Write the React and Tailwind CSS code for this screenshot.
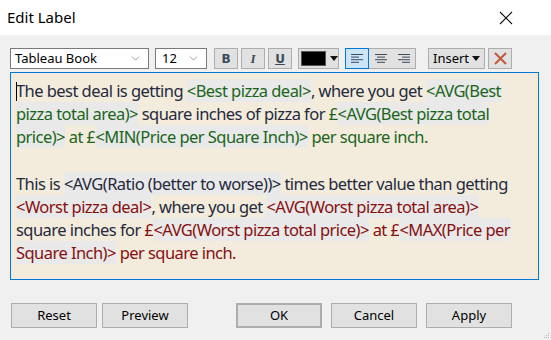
import { ChevronDown } from 'lucide-react';

const G = 'text-[#1b651b]';
const R = 'text-[#861010]';
const D = 'text-[#242a3c]';
const HL = 'bg-[#e9e9e9]';

function Seg({ c = D, hl, children }) {
  return <span className={`${c} ${hl ? HL : ''}`}>{children}</span>;
}

function AlignIcon({ kind }) {
  const lines =
    kind === 'left'
      ? [[0, 12], [0, 8], [0, 12], [0, 8]]
      : kind === 'center'
      ? [[0, 12], [2, 10], [0, 12], [2, 10]]
      : [[0, 12], [4, 12], [0, 12], [4, 12]];
  return (
    <svg width="12" height="10" viewBox="0 0 12 10">
      {lines.map(([a, b], i) => (
        <rect key={i} x={a} y={i * 2.6} width={b - a} height="1" fill="#3c4a5c" />
      ))}
    </svg>
  );
}

function Btn({ children, className = '' }) {
  return (
    <div className={`h-[25px] w-[86px] flex items-center justify-center bg-[#e1e1e1] border border-[#adadad] text-[13px] text-black ${className}`}>
      {children}
    </div>
  );
}

export default function App() {
  return (
    <div className="w-[551px] h-[340px] bg-[#f0f0f0] flex flex-col font-['Noto_Sans',sans-serif] overflow-hidden relative">
      <div className="h-[35px] bg-white flex items-center justify-between pl-[7px] pr-[38px] shrink-0">
        <span className="text-[15px] text-black">Edit Label</span>
        <svg width="14" height="14" viewBox="0 0 14 14">
          <path d="M1 1L13 13M13 1L1 13" stroke="#111" strokeWidth="1.1" />
        </svg>
      </div>

      <div className="flex items-center mt-[13px] pl-[10px] h-[21px]">
        <div className="w-[139px] h-[21px] bg-white border border-[#7a7a7a] flex items-center justify-between pl-[4px] pr-[6px] text-[13px] text-black">
          Tableau Book
          <ChevronDown size={13} strokeWidth={1.2} color="#666" />
        </div>
        <div className="ml-[6px] w-[52px] h-[21px] bg-white border border-[#7a7a7a] flex items-center justify-between pl-[6px] pr-[6px] text-[13px] text-black">
          12
          <ChevronDown size={13} strokeWidth={1.2} color="#666" />
        </div>
        <div className="ml-[7px] w-[24px] h-[21px] bg-[#e1e1e1] border border-[#adadad] flex items-center justify-center text-[12px] font-bold text-[#3c4a5c] font-['DejaVu_Sans',sans-serif]">B</div>
        <div className="ml-[3px] w-[24px] h-[21px] bg-[#e1e1e1] border border-[#adadad] flex items-center justify-center text-[13px] font-bold italic text-[#3c4a5c] font-['Liberation_Serif',serif]">I</div>
        <div className="ml-[3px] w-[24px] h-[21px] bg-[#e1e1e1] border border-[#adadad] flex items-center justify-center text-[12px] font-bold underline text-[#3c4a5c] font-['DejaVu_Sans',sans-serif]">U</div>
        <div className="ml-[6px] w-[41px] h-[21px] bg-[#e1e1e1] border border-[#adadad] flex items-center pl-[2px] gap-[2px]">
          <div className="w-[25px] h-[15px] bg-black border border-[#555]" />
          <svg width="8" height="5" viewBox="0 0 8 5" className="ml-[2px]">
            <path d="M0 0H8L4 5Z" fill="#111" />
          </svg>
        </div>
        <div className="ml-[6px] flex h-[21px] border border-[#adadad] bg-[#e1e1e1]">
          <div className="w-[24px] -m-px h-[21px] bg-[#cce4f7] border border-[#0078d7] flex items-center justify-center">
            <AlignIcon kind="left" />
          </div>
          <div className="w-[23px] flex items-center justify-center ml-px">
            <AlignIcon kind="center" />
          </div>
          <div className="w-[23px] flex items-center justify-center">
            <AlignIcon kind="right" />
          </div>
        </div>
        <div className="ml-[12px] w-[57px] h-[21px] bg-[#e1e1e1] border border-[#adadad] flex items-center justify-center gap-[3px] text-[13px] text-black">
          Insert
          <svg width="8" height="5" viewBox="0 0 8 5">
            <path d="M0 0H8L4 5Z" fill="#111" />
          </svg>
        </div>
        <div className="ml-[3px] w-[24px] h-[21px] bg-[#e1e1e1] border border-[#adadad] flex items-center justify-center">
          <svg width="13" height="13" viewBox="0 0 13 13">
            <path d="M1 1L12 12M12 1L1 12" stroke="#c0573b" strokeWidth="2" />
          </svg>
        </div>
      </div>

      <div className="mt-[3px] ml-[10px] w-[529px] h-[208px] bg-[#f3ecdd] border border-[#0078d7] pl-[5px] pt-[6px] text-[16.5px] leading-[23.2px] whitespace-nowrap font-['Noto_Sans',sans-serif] tracking-[-0.55px]">
        <div>
          <span className="inline-block w-px h-[19px] bg-black align-[-4px] -mr-px" />
          <Seg>The best deal is getting </Seg>
          <Seg c={G} hl>&lt;Best pizza deal&gt;</Seg>
          <Seg>, where you get </Seg>
          <Seg c={G} hl>&lt;AVG(Best</Seg>
        </div>
        <div>
          <Seg c={G} hl>pizza total area)&gt;</Seg>
          <Seg> square inches of pizza for </Seg>
          <Seg c={G}>£</Seg>
          <Seg c={G} hl>&lt;AVG(Best pizza total</Seg>
        </div>
        <div>
          <Seg c={G} hl>price)&gt;</Seg>
          <Seg c={G}> at £</Seg>
          <Seg c={G} hl>&lt;MIN(Price per Square Inch)&gt;</Seg>
          <Seg c={G}> per square inch.</Seg>
        </div>
        <div>&nbsp;</div>
        <div>
          <Seg>This is </Seg>
          <Seg hl>&lt;AVG(Ratio (better to worse))&gt;</Seg>
          <Seg> times better value than getting</Seg>
        </div>
        <div>
          <Seg c={R} hl>&lt;Worst pizza deal&gt;</Seg>
          <Seg>, where you get </Seg>
          <Seg c={R} hl>&lt;AVG(Worst pizza total area)&gt;</Seg>
        </div>
        <div>
          <Seg>square inches for </Seg>
          <Seg c={R}>£</Seg>
          <Seg c={R} hl>&lt;AVG(Worst pizza total price)&gt;</Seg>
          <Seg c={R}> at £</Seg>
          <Seg c={R} hl>&lt;MAX(Price per</Seg>
        </div>
        <div>
          <Seg c={R} hl>Square Inch)&gt;</Seg>
          <Seg c={R}> per square inch.</Seg>
        </div>
      </div>

      <div className="mt-[23px] flex items-center pl-[11px]">
        <Btn>Reset</Btn>
        <Btn className="ml-[5px]">Preview</Btn>
        <Btn className="ml-[48px] border-2 border-[#0078d7]">OK</Btn>
        <Btn className="ml-[9px]">Cancel</Btn>
        <Btn className="ml-[9px]">Apply</Btn>
      </div>

      <svg width="7" height="7" viewBox="0 0 7 7" className="absolute right-[1px] bottom-[1px]">
        {[[5, 0], [5, 2], [3, 2], [5, 4], [3, 4], [1, 4]].map(([x, y], i) => (
          <rect key={i} x={x} y={y + 1} width="1" height="1" fill="#b5b5b5" />
        ))}
      </svg>
    </div>
  );
}
